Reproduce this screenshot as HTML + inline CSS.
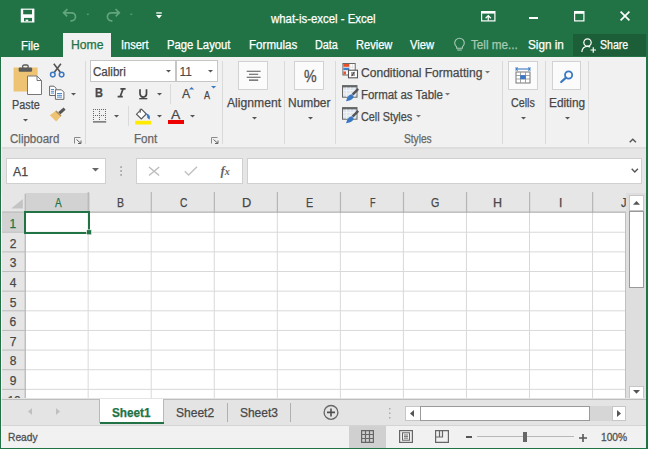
<!DOCTYPE html><html><head><meta charset="utf-8"><style>
html,body{margin:0;padding:0;}body{width:648px;height:449px;overflow:hidden;position:relative;background:#217346;font-family:"Liberation Sans",sans-serif;}
.a{position:absolute;}.t{line-height:1;white-space:nowrap;transform-origin:0 0;}svg{overflow:visible}
</style></head><body>
<svg class="a" style="left:0;top:0" width="648" height="449"><path d="M20.8 8.6H34.4V22.5H20.8Z" fill="#fff"/><rect x="23.2" y="9.8" width="8.8" height="4.5" fill="#217346"/><rect x="24" y="17.9" width="8" height="3.4" fill="#217346"/><rect x="25.6" y="19.6" width="2.6" height="1.7" fill="#fff"/></svg>
<svg class="a" style="left:0;top:0" width="648" height="449"><path d="M67.4 9.2L63.6 12.8L67.2 16.3M63.8 12.8H71.5A4 4 0 0 1 71.5 20.8H70.5" fill="none" stroke="#63a57c" stroke-width="1.7"/></svg>
<svg class="a" style="left:0;top:0" width="648" height="449"><path d="M86.4 13.7H89.4L87.9 15.3Z" fill="#63a57c"/></svg>
<svg class="a" style="left:0;top:0" width="648" height="449"><g transform="translate(182.9 0) scale(-1 1)"><path d="M67.4 9.2L63.6 12.8L67.2 16.3M63.8 12.8H71.5A4 4 0 0 1 71.5 20.8H70.5" fill="none" stroke="#63a57c" stroke-width="1.7"/></g></svg>
<svg class="a" style="left:0;top:0" width="648" height="449"><path d="M129.8 13.7H132.8L131.3 15.3Z" fill="#63a57c"/></svg>
<svg class="a" style="left:0;top:0" width="648" height="449"><rect x="156.2" y="12.3" width="5.6" height="1.3" fill="#fff"/><path d="M156 15.1H162L159 18.6Z" fill="#fff"/></svg>
<div class="a t" style="left:271.12px;top:13.04px;font-size:12px;color:#fff;transform:scaleX(0.9511);-webkit-text-stroke:0.25px #fff;">what-is-excel - Excel</div>
<svg class="a" style="left:481px;top:11px" width="15" height="11" viewBox="0 0 15 11"><rect x="0.6" y="0.6" width="13.3" height="9.3" fill="none" stroke="#fff" stroke-width="1.2"/><rect x="0.6" y="0.6" width="13.3" height="2" fill="#fff"/><path d="M4.6 7.2L7.25 4.6L9.9 7.2M7.25 4.8V9.5" fill="none" stroke="#fff" stroke-width="1.2"/></svg>
<div class="a" style="left:529px;top:16.5px;width:9px;height:2px;background:#fff;"></div>
<svg class="a" style="left:574px;top:11px" width="11" height="11" viewBox="0 0 11 11"><rect x="0.6" y="0.6" width="9.3" height="9.3" fill="none" stroke="#fff" stroke-width="1.2"/><rect x="0.6" y="0.6" width="9.3" height="2.2" fill="#fff"/></svg>
<svg class="a" style="left:619.5px;top:11px" width="10" height="10" viewBox="0 0 10 10"><path d="M0.6 0.6L9.4 9.4M9.4 0.6L0.6 9.4" stroke="#fff" stroke-width="1.7"/></svg>
<div class="a" style="left:63px;top:33px;width:48px;height:25px;background:#f1f1f1;"></div>
<div class="a t" style="left:20.56px;top:39.84px;font-size:12px;color:#fff;transform:scaleX(0.9541);-webkit-text-stroke:0.25px #fff;">File</div>
<div class="a t" style="left:70.50px;top:39.44px;font-size:12px;color:#217346;transform:scaleX(1.0167);-webkit-text-stroke:0.25px #217346;">Home</div>
<div class="a t" style="left:121.48px;top:39.44px;font-size:12px;color:#fff;transform:scaleX(0.9196);-webkit-text-stroke:0.25px #fff;">Insert</div>
<div class="a t" style="left:167.07px;top:39.44px;font-size:12px;color:#fff;transform:scaleX(0.9425);-webkit-text-stroke:0.25px #fff;">Page Layout</div>
<div class="a t" style="left:248.55px;top:39.44px;font-size:12px;color:#fff;transform:scaleX(0.9672);-webkit-text-stroke:0.25px #fff;">Formulas</div>
<div class="a t" style="left:314.61px;top:39.44px;font-size:12px;color:#fff;transform:scaleX(0.9030);-webkit-text-stroke:0.25px #fff;">Data</div>
<div class="a t" style="left:355.59px;top:39.44px;font-size:12px;color:#fff;transform:scaleX(0.9247);-webkit-text-stroke:0.25px #fff;">Review</div>
<div class="a t" style="left:410.45px;top:39.44px;font-size:12px;color:#fff;transform:scaleX(0.9313);-webkit-text-stroke:0.25px #fff;">View</div>
<svg class="a" style="left:454px;top:38px" width="11" height="14" viewBox="0 0 11 14"><path d="M2.6 8.8C1.2 7.6 0.7 6.3 0.7 5A4.8 4.8 0 0 1 10.3 5C10.3 6.3 9.8 7.6 8.4 8.8V10.3H2.6Z" fill="none" stroke="#a6c9b2" stroke-width="1.1"/><path d="M3.2 12H7.8" stroke="#a6c9b2" stroke-width="1.1"/></svg>
<div class="a t" style="left:470.74px;top:39.44px;font-size:12px;color:#a6c9b2;transform:scaleX(0.9754);-webkit-text-stroke:0.25px #a6c9b2;">Tell me...</div>
<div class="a t" style="left:527.97px;top:39.44px;font-size:12px;color:#fff;transform:scaleX(0.9783);-webkit-text-stroke:0.25px #fff;">Sign in</div>
<div class="a" style="left:573px;top:34px;width:73px;height:22px;background:#1b5e38;"></div>
<svg class="a" style="left:581px;top:38px" width="16" height="15" viewBox="0 0 16 15"><circle cx="6.5" cy="4.5" r="3.7" fill="none" stroke="#fff" stroke-width="1.2"/><path d="M0.8 14C1.2 10.5 3.5 8.4 6.5 8.4C7.6 8.4 8.5 8.7 9.2 9.1" fill="none" stroke="#fff" stroke-width="1.2"/><path d="M9.5 12H15M12.25 9.2V14.8" stroke="#fff" stroke-width="1.2"/></svg>
<div class="a t" style="left:599.52px;top:39.44px;font-size:12px;color:#fff;transform:scaleX(0.8823);-webkit-text-stroke:0.25px #fff;">Share</div>
<div class="a" style="left:1px;top:57px;width:645px;height:91px;background:#f1f1f1;"></div>
<div class="a" style="left:1px;top:147px;width:645px;height:2px;background:#dddddd;"></div>
<div class="a" style="left:84.5px;top:61px;width:1px;height:83px;background:#dadada;"></div>
<div class="a" style="left:221.5px;top:61px;width:1px;height:83px;background:#dadada;"></div>
<div class="a" style="left:284px;top:61px;width:1px;height:83px;background:#dadada;"></div>
<div class="a" style="left:335px;top:61px;width:1px;height:83px;background:#dadada;"></div>
<div class="a" style="left:502px;top:61px;width:1px;height:83px;background:#dadada;"></div>
<div class="a" style="left:545px;top:61px;width:1px;height:83px;background:#dadada;"></div>
<div class="a" style="left:588px;top:61px;width:1px;height:83px;background:#dadada;"></div>
<div class="a t" style="left:10.41px;top:133.44px;font-size:12px;color:#666;transform:scaleX(0.9604);-webkit-text-stroke:0.25px #666;">Clipboard</div>
<div class="a t" style="left:133.75px;top:133.44px;font-size:12px;color:#666;transform:scaleX(0.9678);-webkit-text-stroke:0.25px #666;">Font</div>
<div class="a t" style="left:404.44px;top:133.44px;font-size:12px;color:#666;transform:scaleX(0.8454);-webkit-text-stroke:0.25px #666;">Styles</div>
<svg class="a" style="left:73.5px;top:136.8px" width="8" height="7" viewBox="0 0 8 7"><path d="M0.5 6.5V0.5H6.5" fill="none" stroke="#8a8a8a" stroke-width="1"/><path d="M2.5 2.5L7 6.5M7 3.5V6.5H4" fill="none" stroke="#666" stroke-width="1"/></svg>
<svg class="a" style="left:211.3px;top:136.8px" width="8" height="7" viewBox="0 0 8 7"><path d="M0.5 6.5V0.5H6.5" fill="none" stroke="#8a8a8a" stroke-width="1"/><path d="M2.5 2.5L7 6.5M7 3.5V6.5H4" fill="none" stroke="#666" stroke-width="1"/></svg>
<svg class="a" style="left:13px;top:64px" width="30" height="32" viewBox="0 0 30 32"><rect x="0.6" y="3.5" width="24" height="24" fill="#eec373"/><rect x="5.7" y="3.4" width="13.4" height="4.4" rx="1.2" fill="#5a5a5a"/><rect x="9.6" y="1" width="5.6" height="3.6" rx="1.5" fill="none" stroke="#5a5a5a" stroke-width="1.3"/><path d="M14.5 12H24L28.5 16.5V30.5H14.5Z" fill="#fff" stroke="#777" stroke-width="1"/><path d="M24 12V16.5H28.5" fill="none" stroke="#777" stroke-width="1"/></svg>
<div class="a t" style="left:11.61px;top:99.14px;font-size:12px;color:#484848;transform:scaleX(0.9017);-webkit-text-stroke:0.25px #484848;">Paste</div>
<svg class="a" style="left:22.5px;top:118.5px" width="5" height="3" viewBox="0 0 5 3"><path d="M0 0H5L2.5 2.6Z" fill="#555"/></svg>
<div class="a" style="left:89.8px;top:60.2px;width:86.2px;height:21.6px;background:#fff;box-sizing:border-box;border:1px solid #c6c6c6;"></div>
<div class="a" style="left:175.5px;top:60.2px;width:42px;height:21.6px;background:#fff;box-sizing:border-box;border:1px solid #c6c6c6;"></div>
<svg class="a" style="left:166px;top:70px" width="5" height="3" viewBox="0 0 5 3"><path d="M0 0H5L2.5 2.6Z" fill="#555"/></svg>
<div class="a t" style="left:93.11px;top:65.74px;font-size:12px;color:#484848;transform:scaleX(0.9635);-webkit-text-stroke:0.25px #484848;">Calibri</div>
<div class="a t" style="left:179.59px;top:65.74px;font-size:12px;color:#484848;-webkit-text-stroke:0.1px #484848;">11</div>
<svg class="a" style="left:208px;top:70px" width="5" height="3" viewBox="0 0 5 3"><path d="M0 0H5L2.5 2.6Z" fill="#555"/></svg>
<div class="a t" style="left:95.47px;top:86.84px;font-size:12px;color:#484848;font-weight:bold;transform:scaleX(0.9155);-webkit-text-stroke:0.25px #484848;">B</div>
<svg class="a" style="left:117px;top:88px" width="9" height="10" viewBox="0 0 9 10"><path d="M3.4 0.9H8.6M0.6 8.7H5.8M6.1 0.9L3.1 8.7" fill="none" stroke="#484848" stroke-width="1.7"/></svg>
<svg class="a" style="left:139px;top:88.5px" width="9" height="11" viewBox="0 0 9 11"><path d="M1 0.3V4.8A3.25 3.25 0 0 0 7.5 4.8V0.3" fill="none" stroke="#444" stroke-width="1.7"/><rect x="0.2" y="9" width="8.1" height="1.3" fill="#444"/></svg>
<svg class="a" style="left:157px;top:93px" width="5" height="3" viewBox="0 0 5 3"><path d="M0 0H5L2.5 2.6Z" fill="#555"/></svg>
<div class="a" style="left:170.4px;top:83.5px;width:1px;height:20px;background:#dadada;"></div>
<div class="a t" style="left:181.68px;top:87.86px;font-size:12.8px;color:#484848;transform:scaleX(0.9543);-webkit-text-stroke:0.25px #484848;">A</div>
<svg class="a" style="left:188.8px;top:87px" width="6" height="3" viewBox="0 0 6 3"><path d="M0 2.6H5.2L2.6 0Z" fill="#3b78c2"/></svg>
<div class="a t" style="left:204.48px;top:89.73px;font-size:10.6px;color:#484848;transform:scaleX(0.8536);-webkit-text-stroke:0.25px #484848;">A</div>
<svg class="a" style="left:210.6px;top:86.4px" width="6" height="3" viewBox="0 0 6 3"><path d="M0 0H5.2L2.6 2.6Z" fill="#3b78c2"/></svg>
<svg class="a" style="left:93px;top:108.5px" width="14" height="14" viewBox="0 0 14 14"><g fill="#666"><rect x="0" y="0" width="1" height="1"/><rect x="2" y="0" width="1" height="1"/><rect x="4" y="0" width="1" height="1"/><rect x="6" y="0" width="1" height="1"/><rect x="8" y="0" width="1" height="1"/><rect x="10" y="0" width="1" height="1"/><rect x="12" y="0" width="1" height="1"/><rect x="0" y="6" width="1" height="1"/><rect x="2" y="6" width="1" height="1"/><rect x="4" y="6" width="1" height="1"/><rect x="6" y="6" width="1" height="1"/><rect x="8" y="6" width="1" height="1"/><rect x="10" y="6" width="1" height="1"/><rect x="12" y="6" width="1" height="1"/><rect x="0" y="2" width="1" height="1"/><rect x="0" y="4" width="1" height="1"/><rect x="0" y="8" width="1" height="1"/><rect x="0" y="10" width="1" height="1"/><rect x="6" y="2" width="1" height="1"/><rect x="6" y="4" width="1" height="1"/><rect x="6" y="8" width="1" height="1"/><rect x="6" y="10" width="1" height="1"/><rect x="12" y="2" width="1" height="1"/><rect x="12" y="4" width="1" height="1"/><rect x="12" y="8" width="1" height="1"/><rect x="12" y="10" width="1" height="1"/></g><rect x="0" y="12.3" width="13.2" height="1.2" fill="#555"/></svg>
<svg class="a" style="left:114px;top:115px" width="5" height="3" viewBox="0 0 5 3"><path d="M0 0H5L2.5 2.6Z" fill="#555"/></svg>
<div class="a" style="left:127.5px;top:105.5px;width:1px;height:20px;background:#dadada;"></div>
<svg class="a" style="left:134.5px;top:107.5px" width="17" height="17" viewBox="0 0 17 17"><path d="M6.5 1.2L11.3 6L6.3 11L1.5 6.2Z" fill="#fff" stroke="#555" stroke-width="1.1"/><path d="M5.2 0.8V4.8" stroke="#555" stroke-width="1.1"/><path d="M11.3 6C13.5 6.5 14.7 8 14.2 10.6C13.4 10.2 12.8 9.2 12.3 8.5" fill="#3b78c2" stroke="#3b78c2" stroke-width="1.2"/><rect x="0.2" y="12.8" width="16" height="3.7" fill="#ffea00"/></svg>
<svg class="a" style="left:156.5px;top:115px" width="5" height="3" viewBox="0 0 5 3"><path d="M0 0H5L2.5 2.6Z" fill="#555"/></svg>
<div class="a t" style="left:171.27px;top:108.72px;font-size:12.5px;color:#484848;transform:scaleX(1.1100);-webkit-text-stroke:0.25px #484848;">A</div>
<div class="a" style="left:168px;top:120px;width:16px;height:3.7px;background:#e00;"></div>
<svg class="a" style="left:189.8px;top:115px" width="5" height="3" viewBox="0 0 5 3"><path d="M0 0H5L2.5 2.6Z" fill="#555"/></svg>
<div class="a" style="left:237.8px;top:61px;width:29.8px;height:28.8px;background:#fbfbfb;box-sizing:border-box;border:1px solid #d2d2d2;"></div>
<svg class="a" style="left:0;top:0" width="648" height="449"><path d="M246.7 71.2H260.6M249 74.2H258.2M246.7 77.2H260.6M249 80.1H258.2" stroke="#555" stroke-width="1.1"/></svg>
<div class="a t" style="left:226.78px;top:96.64px;font-size:12px;color:#484848;transform:scaleX(1.0122);-webkit-text-stroke:0.25px #484848;">Alignment</div>
<svg class="a" style="left:251.5px;top:116.8px" width="5" height="3" viewBox="0 0 5 3"><path d="M0 0H5L2.5 2.6Z" fill="#555"/></svg>
<div class="a" style="left:294px;top:61px;width:29.6px;height:28.8px;background:#fbfbfb;box-sizing:border-box;border:1px solid #d2d2d2;"></div>
<div class="a t" style="left:304.19px;top:69.26px;font-size:16px;color:#505050;transform:scaleX(0.8864);-webkit-text-stroke:0.3px #505050;">%</div>
<div class="a t" style="left:288.22px;top:97.14px;font-size:12px;color:#484848;transform:scaleX(0.9953);-webkit-text-stroke:0.25px #484848;">Number</div>
<svg class="a" style="left:308px;top:116.8px" width="5" height="3" viewBox="0 0 5 3"><path d="M0 0H5L2.5 2.6Z" fill="#555"/></svg>
<svg class="a" style="left:0;top:0" width="648" height="449"><rect x="342.9" y="63.5" width="12.3" height="11.5" fill="#fff" stroke="#6a6a6a" stroke-width="1"/><rect x="343.4" y="64" width="6" height="3" fill="#e8502a"/><rect x="343.4" y="67.6" width="6" height="2.6" fill="#3f7fcc"/><rect x="343.4" y="71.4" width="2.6" height="3.1" fill="#e8502a"/><path d="M349.8 64V74.6M352.6 64V68.5M343.4 67.2H354.6M343.4 70.8H348" stroke="#ddd" stroke-width="0.7"/><rect x="348.5" y="70.2" width="9" height="7.6" fill="#fff" stroke="#555" stroke-width="1.1"/><path d="M351 73H355M351 75H355M354.2 71.8L351.8 76.2" stroke="#333" stroke-width="0.9"/></svg>
<div class="a t" style="left:361.19px;top:66.64px;font-size:12px;color:#484848;transform:scaleX(1.0055);-webkit-text-stroke:0.25px #484848;">Conditional Formatting</div>
<svg class="a" style="left:485.4px;top:70.5px" width="5" height="3" viewBox="0 0 5 3"><path d="M0 0H5L2.5 2.6Z" fill="#777"/></svg>
<svg class="a" style="left:0;top:0" width="648" height="449"><g transform="translate(0 0.0)"><rect x="342.5" y="85.6" width="14.5" height="11.6" fill="#dbe5f1" stroke="#666" stroke-width="1"/><rect x="342.5" y="85.6" width="14.5" height="1.8" fill="#666"/><path d="M346.4 87.5V96.8M350.2 87.5V96.8M354 87.5V96.8M343 90.6H356.5M343 93.8H356.5" stroke="#f4f4f4" stroke-width="0.9"/><path d="M358.2 88.8L352.6 94.6" stroke="#555" stroke-width="2.4"/><path d="M352 94.2C349.2 94.5 347.6 96.2 346 101.2C349 100.9 352.6 99.8 353.8 96.8Z" fill="#3b78c2"/></g></svg>
<div class="a t" style="left:360.86px;top:88.84px;font-size:12px;color:#484848;transform:scaleX(0.9549);-webkit-text-stroke:0.25px #484848;">Format as Table</div>
<svg class="a" style="left:445.4px;top:92.8px" width="5" height="3" viewBox="0 0 5 3"><path d="M0 0H5L2.5 2.6Z" fill="#777"/></svg>
<svg class="a" style="left:0;top:0" width="648" height="449"><g transform="translate(0 22.0)"><rect x="342.5" y="85.6" width="14.5" height="11.6" fill="#dbe5f1" stroke="#666" stroke-width="1"/><rect x="342.5" y="85.6" width="14.5" height="1.8" fill="#666"/><path d="M346.4 87.5V96.8M350.2 87.5V96.8M354 87.5V96.8M343 90.6H356.5M343 93.8H356.5" stroke="#f4f4f4" stroke-width="0.9"/><path d="M358.2 88.8L352.6 94.6" stroke="#555" stroke-width="2.4"/><path d="M352 94.2C349.2 94.5 347.6 96.2 346 101.2C349 100.9 352.6 99.8 353.8 96.8Z" fill="#3b78c2"/></g></svg>
<div class="a t" style="left:361.25px;top:110.84px;font-size:12px;color:#484848;transform:scaleX(0.9022);-webkit-text-stroke:0.25px #484848;">Cell Styles</div>
<svg class="a" style="left:415.7px;top:114.8px" width="5" height="3" viewBox="0 0 5 3"><path d="M0 0H5L2.5 2.6Z" fill="#777"/></svg>
<div class="a" style="left:508.2px;top:61.3px;width:29.7px;height:28.5px;background:#fbfbfb;box-sizing:border-box;border:1px solid #d2d2d2;"></div>
<svg class="a" style="left:515px;top:67px" width="17" height="18" viewBox="0 0 17 18"><path d="M1 2H15" stroke="#3b78c2" stroke-width="1.1"/><path d="M3 0.5L1 2L3 3.5M13 0.5L15 2L13 3.5" fill="none" stroke="#3b78c2" stroke-width="1"/><path d="M1 0V4M15 0V4" stroke="#3b78c2" stroke-width="0.8"/><rect x="1" y="5" width="14" height="11" fill="#fff" stroke="#777" stroke-width="1"/><path d="M1 8.5H15M1 12H15M5.5 5V16M10.5 5V16" stroke="#999" stroke-width="0.9"/><rect x="5.2" y="8.2" width="5.6" height="4" fill="#3b78c2"/></svg>
<div class="a t" style="left:511.46px;top:96.64px;font-size:12px;color:#484848;transform:scaleX(0.8935);-webkit-text-stroke:0.25px #484848;">Cells</div>
<svg class="a" style="left:521.4px;top:117px" width="5" height="3" viewBox="0 0 5 3"><path d="M0 0H5L2.5 2.6Z" fill="#555"/></svg>
<div class="a" style="left:552.4px;top:61.3px;width:28.3px;height:28.5px;background:#fbfbfb;box-sizing:border-box;border:1px solid #d2d2d2;"></div>
<svg class="a" style="left:560px;top:69.5px" width="14" height="13" viewBox="0 0 14 13"><circle cx="8.6" cy="5" r="3.6" fill="none" stroke="#3b78c2" stroke-width="1.8"/><path d="M6 7.6L1.2 12" stroke="#3b78c2" stroke-width="2.2" stroke-linecap="round"/></svg>
<div class="a t" style="left:548.53px;top:96.64px;font-size:12px;color:#484848;transform:scaleX(0.9847);-webkit-text-stroke:0.25px #484848;">Editing</div>
<svg class="a" style="left:564.6px;top:117px" width="5" height="3" viewBox="0 0 5 3"><path d="M0 0H5L2.5 2.6Z" fill="#555"/></svg>
<svg class="a" style="left:628.8px;top:137.5px" width="8" height="5" viewBox="0 0 8 5"><path d="M0.7 4.3L3.8 1.2L6.9 4.3" fill="none" stroke="#555" stroke-width="1.4"/></svg>
<svg class="a" style="left:0;top:0" width="648" height="449"><path d="M53.8 63.8L60.3 72.3M60.9 63.8L54.4 72.3" stroke="#555" stroke-width="1.6"/><circle cx="52.8" cy="74.6" r="2.3" fill="none" stroke="#3b78c2" stroke-width="1.5"/><circle cx="61.6" cy="74.6" r="2.3" fill="none" stroke="#3b78c2" stroke-width="1.5"/></svg>
<svg class="a" style="left:0;top:0" width="648" height="449"><path d="M49.6 86.2H54L56 88.2V95.5H49.6Z" fill="#fff" stroke="#666" stroke-width="1"/><path d="M55.4 89.8H61.5L63.9 92.2V99.3H55.4Z" fill="#fff" stroke="#666" stroke-width="1"/><path d="M51 89.5H54M51 91.3H54M51 93.1H54M57 93.5H62M57 95.3H62M57 97.1H62" stroke="#3b78c2" stroke-width="0.9"/></svg>
<svg class="a" style="left:71px;top:92.6px" width="5" height="3" viewBox="0 0 5 3"><path d="M0 0H5L2.5 2.6Z" fill="#555"/></svg>
<svg class="a" style="left:0;top:0" width="648" height="449"><path d="M59 113.5L64.6 108.6" stroke="#555" stroke-width="3"/><path d="M56.4 110.4L61.6 115.6L56.2 121.6L49.8 115.2Z" fill="#eec373"/><path d="M55.8 111L61 116.2" stroke="#a58a5a" stroke-width="1.1"/></svg>
<div class="a" style="left:1px;top:149px;width:645px;height:44px;background:#e6e6e6;"></div>
<div class="a" style="left:6.2px;top:158px;width:99.6px;height:26px;background:#fff;box-sizing:border-box;border:1px solid #d0d0d0;"></div>
<div class="a t" style="left:12.98px;top:165.84px;font-size:12px;color:#484848;transform:scaleX(1.0307);-webkit-text-stroke:0.25px #484848;">A1</div>
<svg class="a" style="left:92.4px;top:168px" width="7" height="4" viewBox="0 0 7 4"><path d="M0 0H7L3.5 3.5Z" fill="#666"/></svg>
<svg class="a" style="left:120px;top:166px" width="3" height="10" viewBox="0 0 3 10"><g fill="#999"><rect x="0.3" y="0.3" width="1.6" height="1.6"/><rect x="0.3" y="4.2" width="1.6" height="1.6"/><rect x="0.3" y="8.1" width="1.6" height="1.6"/></g></svg>
<div class="a" style="left:136px;top:158px;width:107.4px;height:26px;background:#fff;box-sizing:border-box;border:1px solid #d0d0d0;"></div>
<svg class="a" style="left:0;top:0" width="648" height="449"><path d="M149 167L159.2 175.5M159.2 167L149 175.5" stroke="#bdbdbd" stroke-width="1.5"/></svg>
<svg class="a" style="left:183.5px;top:165.5px" width="14" height="10" viewBox="0 0 14 10"><path d="M0.8 5.2L4.6 9L13 0.8" fill="none" stroke="#c2c2c2" stroke-width="1.5"/></svg>
<div class="a t" style="left:220.5px;top:164px;font-size:13px;font-family:'Liberation Serif',serif;font-style:italic;font-weight:bold;color:#666">f<span style="font-size:10px">x</span></div>
<div class="a" style="left:247.4px;top:158px;width:394.5px;height:26px;background:#fff;box-sizing:border-box;border:1px solid #d0d0d0;"></div>
<svg class="a" style="left:630.5px;top:168px" width="8" height="5" viewBox="0 0 8 5"><path d="M0.7 0.8L3.8 3.9L6.9 0.8" fill="none" stroke="#555" stroke-width="1.4"/></svg>
<div class="a" style="left:1px;top:193px;width:627px;height:19.6px;background:#e6e6e6;"></div>
<div class="a" style="left:1px;top:212.6px;width:24px;height:185.9px;background:#e6e6e6;"></div>
<div class="a" style="left:25px;top:212.6px;width:601px;height:185.9px;background:#fff;"></div>
<div class="a" style="left:25px;top:193px;width:64.5px;height:19.6px;background:#d2d2d2;"></div>
<div class="a" style="left:1px;top:212.6px;width:24px;height:19.64px;background:#d2d2d2;"></div>
<svg class="a" style="left:0;top:0" width="648" height="449"><rect x="87.65" y="212.6" width="1" height="185.90" fill="#d9d9d9"/><rect x="87.65" y="192" width="1.2" height="20.60" fill="#b6b6b6"/><rect x="150.70" y="212.6" width="1" height="185.90" fill="#d9d9d9"/><rect x="150.70" y="192" width="1.2" height="20.60" fill="#b6b6b6"/><rect x="213.75" y="212.6" width="1" height="185.90" fill="#d9d9d9"/><rect x="213.75" y="192" width="1.2" height="20.60" fill="#b6b6b6"/><rect x="276.80" y="212.6" width="1" height="185.90" fill="#d9d9d9"/><rect x="276.80" y="192" width="1.2" height="20.60" fill="#b6b6b6"/><rect x="339.85" y="212.6" width="1" height="185.90" fill="#d9d9d9"/><rect x="339.85" y="192" width="1.2" height="20.60" fill="#b6b6b6"/><rect x="402.90" y="212.6" width="1" height="185.90" fill="#d9d9d9"/><rect x="402.90" y="192" width="1.2" height="20.60" fill="#b6b6b6"/><rect x="465.95" y="212.6" width="1" height="185.90" fill="#d9d9d9"/><rect x="465.95" y="192" width="1.2" height="20.60" fill="#b6b6b6"/><rect x="529.00" y="212.6" width="1" height="185.90" fill="#d9d9d9"/><rect x="529.00" y="192" width="1.2" height="20.60" fill="#b6b6b6"/><rect x="592.05" y="212.6" width="1" height="185.90" fill="#d9d9d9"/><rect x="592.05" y="192" width="1.2" height="20.60" fill="#b6b6b6"/><rect x="25" y="231.74" width="601" height="1" fill="#d9d9d9"/><rect x="1" y="231.74" width="24" height="1" fill="#bdbdbd"/><rect x="25" y="251.38" width="601" height="1" fill="#d9d9d9"/><rect x="1" y="251.38" width="24" height="1" fill="#bdbdbd"/><rect x="25" y="271.02" width="601" height="1" fill="#d9d9d9"/><rect x="1" y="271.02" width="24" height="1" fill="#bdbdbd"/><rect x="25" y="290.66" width="601" height="1" fill="#d9d9d9"/><rect x="1" y="290.66" width="24" height="1" fill="#bdbdbd"/><rect x="25" y="310.30" width="601" height="1" fill="#d9d9d9"/><rect x="1" y="310.30" width="24" height="1" fill="#bdbdbd"/><rect x="25" y="329.94" width="601" height="1" fill="#d9d9d9"/><rect x="1" y="329.94" width="24" height="1" fill="#bdbdbd"/><rect x="25" y="349.58" width="601" height="1" fill="#d9d9d9"/><rect x="1" y="349.58" width="24" height="1" fill="#bdbdbd"/><rect x="25" y="369.22" width="601" height="1" fill="#d9d9d9"/><rect x="1" y="369.22" width="24" height="1" fill="#bdbdbd"/><rect x="25" y="388.86" width="601" height="1" fill="#d9d9d9"/><rect x="1" y="388.86" width="24" height="1" fill="#bdbdbd"/><rect x="1" y="211.60" width="625" height="1" fill="#ababab"/><rect x="24.6" y="194" width="1.3" height="204.50" fill="#b8b8b8"/></svg>
<div class="a t" style="left:54.88px;top:196.84px;font-size:12px;color:#217346;transform:scaleX(0.8295);-webkit-text-stroke:0.25px #217346;">A</div>
<div class="a t" style="left:116.64px;top:196.84px;font-size:12px;color:#484848;transform:scaleX(0.8768);-webkit-text-stroke:0.25px #484848;">B</div>
<div class="a t" style="left:179.98px;top:196.84px;font-size:12px;color:#484848;transform:scaleX(0.8553);-webkit-text-stroke:0.25px #484848;">C</div>
<div class="a t" style="left:241.85px;top:196.84px;font-size:12px;color:#484848;transform:scaleX(1.0693);-webkit-text-stroke:0.25px #484848;">D</div>
<div class="a t" style="left:305.62px;top:196.84px;font-size:12px;color:#484848;transform:scaleX(0.8918);-webkit-text-stroke:0.25px #484848;">E</div>
<div class="a t" style="left:369.76px;top:196.84px;font-size:12px;color:#484848;transform:scaleX(0.7502);-webkit-text-stroke:0.25px #484848;">F</div>
<div class="a t" style="left:430.96px;top:196.84px;font-size:12px;color:#484848;transform:scaleX(0.8935);-webkit-text-stroke:0.25px #484848;">G</div>
<div class="a t" style="left:493.47px;top:196.84px;font-size:12px;color:#484848;transform:scaleX(1.0443);-webkit-text-stroke:0.25px #484848;">H</div>
<div class="a t" style="left:558.99px;top:196.84px;font-size:12px;color:#484848;-webkit-text-stroke:0.25px #484848;">I</div>
<div class="a t" style="left:621.33px;top:196.84px;font-size:12px;color:#484848;transform:scaleX(0.9143);-webkit-text-stroke:0.25px #484848;">J</div>
<div class="a t" style="left:9.50px;top:217.94px;font-size:12px;color:#217346;-webkit-text-stroke:0.25px #217346;">1</div>
<div class="a t" style="left:9.66px;top:237.58px;font-size:12px;color:#484848;-webkit-text-stroke:0.25px #484848;">2</div>
<div class="a t" style="left:9.70px;top:257.22px;font-size:12px;color:#484848;-webkit-text-stroke:0.25px #484848;">3</div>
<div class="a t" style="left:9.70px;top:276.86px;font-size:12px;color:#484848;-webkit-text-stroke:0.25px #484848;">4</div>
<div class="a t" style="left:9.67px;top:296.50px;font-size:12px;color:#484848;-webkit-text-stroke:0.25px #484848;">5</div>
<div class="a t" style="left:9.62px;top:316.14px;font-size:12px;color:#484848;-webkit-text-stroke:0.25px #484848;">6</div>
<div class="a t" style="left:9.66px;top:335.78px;font-size:12px;color:#484848;-webkit-text-stroke:0.25px #484848;">7</div>
<div class="a t" style="left:9.66px;top:355.42px;font-size:12px;color:#484848;-webkit-text-stroke:0.25px #484848;">8</div>
<div class="a t" style="left:9.67px;top:375.06px;font-size:12px;color:#484848;-webkit-text-stroke:0.25px #484848;">9</div>
<div class="a t" style="left:7.40px;top:394.70px;font-size:12px;color:#484848;-webkit-text-stroke:0.25px #484848;">10</div>
<svg class="a" style="left:0;top:0" width="648" height="449"><path d="M11.1 208.6H22.9V198.9Z" fill="#c4c4c4"/><rect x="1" y="193" width="1" height="206" fill="#f7f7f7"/></svg>
<svg class="a" style="left:0px;top:0px" width="1" height="1" viewBox="0 0 1 1"></svg>
<div class="a" style="left:24px;top:211px;width:66px;height:22.5px;box-sizing:border-box;border:2px solid #217346;"></div>
<svg class="a" style="left:0;top:0" width="648" height="449"><rect x="86.6" y="229.8" width="5" height="5" fill="#217346" stroke="#fff" stroke-width="0.6"/></svg>
<div class="a" style="left:626px;top:193px;width:20px;height:206px;background:#dedede;"></div>
<div class="a" style="left:625px;top:212px;width:1px;height:187px;background:#c0c0c0;"></div>
<div class="a" style="left:629.3px;top:195.4px;width:14.5px;height:15.2px;background:#fff;box-sizing:border-box;border:1px solid #c6c6c6;"></div>
<svg class="a" style="left:633.3px;top:200.5px" width="7" height="4" viewBox="0 0 7 4"><path d="M0 3.8H7L3.5 0Z" fill="#555"/></svg>
<div class="a" style="left:629.3px;top:210.5px;width:14.5px;height:77.5px;background:#fff;box-sizing:border-box;border:1px solid #9a9a9a;"></div>
<div class="a" style="left:629.3px;top:385.5px;width:14.5px;height:14px;background:#fff;box-sizing:border-box;border:1px solid #c6c6c6;"></div>
<svg class="a" style="left:633.3px;top:390px" width="7" height="4" viewBox="0 0 7 4"><path d="M0 0H7L3.5 3.8Z" fill="#555"/></svg>
<div class="a" style="left:1px;top:398px;width:645px;height:27.5px;background:#e4e4e4;"></div>
<div class="a" style="left:1px;top:398.5px;width:645px;height:1.2px;background:#bdbdbd;"></div>
<svg class="a" style="left:27.5px;top:408px" width="4" height="7" viewBox="0 0 4 7"><path d="M4 0V7L0 3.5Z" fill="#c0c0c0"/></svg>
<svg class="a" style="left:55.6px;top:408px" width="4" height="7" viewBox="0 0 4 7"><path d="M0 0V7L4 3.5Z" fill="#c0c0c0"/></svg>
<div class="a" style="left:99px;top:398.5px;width:65px;height:24.5px;background:#fff;border-left:1px solid #b9b9b9;border-right:1px solid #b9b9b9;box-sizing:border-box;"></div>
<div class="a" style="left:99.7px;top:421.5px;width:64px;height:2px;background:#217346;"></div>
<div class="a t" style="left:111.66px;top:406.84px;font-size:12px;color:#217346;font-weight:bold;transform:scaleX(0.9800);-webkit-text-stroke:0.25px #217346;">Sheet1</div>
<div class="a t" style="left:175.95px;top:406.84px;font-size:12px;color:#484848;transform:scaleX(1.0031);-webkit-text-stroke:0.25px #484848;">Sheet2</div>
<div class="a" style="left:227px;top:402.5px;width:1px;height:19.5px;background:#b0b0b0;"></div>
<div class="a t" style="left:239.95px;top:406.84px;font-size:12px;color:#484848;-webkit-text-stroke:0.25px #484848;">Sheet3</div>
<div class="a" style="left:290px;top:402.5px;width:1px;height:19.5px;background:#b0b0b0;"></div>
<svg class="a" style="left:0;top:0" width="648" height="449"><circle cx="331" cy="412.4" r="6.9" fill="none" stroke="#666" stroke-width="1.3"/><path d="M331 408.4V416.4M327 412.4H335" stroke="#505050" stroke-width="1.6"/></svg>
<svg class="a" style="left:388.8px;top:407.5px" width="2" height="11" viewBox="0 0 2 11"><g fill="#aaa"><rect x="0" y="0" width="1.5" height="1.5"/><rect x="0" y="4.5" width="1.5" height="1.5"/><rect x="0" y="9" width="1.5" height="1.5"/></g></svg>
<div class="a" style="left:405px;top:406px;width:221px;height:14.5px;background:#d6d6d6;"></div>
<div class="a" style="left:405px;top:406px;width:15.5px;height:14.5px;background:#fff;box-sizing:border-box;border:1px solid #c6c6c6;"></div>
<svg class="a" style="left:410.2px;top:409.8px" width="4" height="7" viewBox="0 0 4 7"><path d="M4 0V7L0 3.5Z" fill="#555"/></svg>
<div class="a" style="left:419.5px;top:406px;width:170.5px;height:14.5px;background:#fff;box-sizing:border-box;border:1px solid #9a9a9a;"></div>
<div class="a" style="left:611.5px;top:406px;width:14.5px;height:14.5px;background:#fff;box-sizing:border-box;border:1px solid #c6c6c6;"></div>
<svg class="a" style="left:616.5px;top:409.8px" width="4" height="7" viewBox="0 0 4 7"><path d="M0 0V7L4 3.5Z" fill="#555"/></svg>
<div class="a" style="left:1px;top:425.5px;width:645px;height:22px;background:#f1f1f1;"></div>
<div class="a" style="left:1px;top:425px;width:645px;height:1px;background:#d4d4d4;"></div>
<div class="a t" style="left:7.96px;top:431.69px;font-size:11px;color:#505050;transform:scaleX(0.9296);-webkit-text-stroke:0.3px #505050;">Ready</div>
<div class="a" style="left:349.2px;top:426px;width:36.5px;height:21.5px;background:#d0d0d0;"></div>
<svg class="a" style="left:361px;top:429.5px" width="13" height="13" viewBox="0 0 13 13"><path d="M0.6 0.6H12.4V12.4H0.6ZM4.5 0.6V12.4M8.5 0.6V12.4M0.6 4.5H12.4M0.6 8.5H12.4" fill="none" stroke="#666" stroke-width="1.2"/></svg>
<svg class="a" style="left:398.5px;top:429.5px" width="14" height="13" viewBox="0 0 14 13"><rect x="0.6" y="0.6" width="12.8" height="11.8" fill="none" stroke="#666" stroke-width="1.2"/><rect x="3.5" y="2.8" width="7" height="7.4" fill="none" stroke="#666" stroke-width="1"/><path d="M5 5H9M5 6.6H9M5 8.2H9" stroke="#666" stroke-width="0.9"/></svg>
<svg class="a" style="left:435px;top:429.5px" width="14" height="13" viewBox="0 0 14 13"><path d="M0.6 0.6H13.4V12.4H0.6Z" fill="none" stroke="#666" stroke-width="1.2"/><path d="M4.5 0.6V7H0.6M4.5 7H7.5V0.6" fill="none" stroke="#666" stroke-width="1.2"/></svg>
<div class="a" style="left:466px;top:436px;width:6px;height:1.6px;background:#555;"></div>
<div class="a" style="left:477px;top:436px;width:97px;height:1px;background:#b8b8b8;"></div>
<div class="a" style="left:523.4px;top:431.6px;width:3.6px;height:10.4px;background:#666;"></div>
<svg class="a" style="left:578.5px;top:434px" width="8" height="8" viewBox="0 0 8 8"><path d="M4 0V8M0 4H8" stroke="#555" stroke-width="1.6"/></svg>
<div class="a t" style="left:600.72px;top:431.69px;font-size:11px;color:#505050;transform:scaleX(0.9292);-webkit-text-stroke:0.3px #505050;">100%</div>
<div class="a" style="left:1px;top:57px;width:1px;height:391px;background:rgba(255,255,255,0.6);"></div>
<div class="a" style="left:0px;top:57px;width:1px;height:392px;background:#217346;"></div>
<div class="a" style="left:646px;top:57px;width:2px;height:392px;background:#217346;"></div>
<div class="a" style="left:0px;top:447.5px;width:648px;height:2px;background:#217346;"></div>
</body></html>
